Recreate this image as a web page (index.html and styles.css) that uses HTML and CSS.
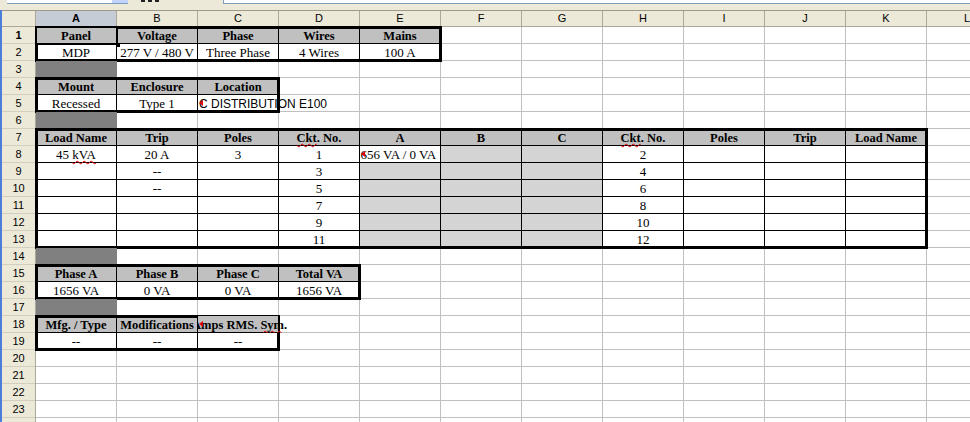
FILE: index.html
```html
<!DOCTYPE html>
<html lang="en">

<head>
    <meta charset="UTF-8" />
    <title>Panel Schedule - MDP</title>
    <link rel="stylesheet" href="styles.css">
</head>

<body>
    <div class="toolbar">
        <div class="namebox"><span class="drop"></span></div>
        <div class="tools"><i></i><i></i><i></i></div>
        <div class="formula"></div>
    </div>

    <div class="sheet">
        <div class="colheads">
            <div class="corner"></div>
            <div class="sel">A</div>
            <div>B</div>
            <div>C</div>
            <div>D</div>
            <div>E</div>
            <div>F</div>
            <div>G</div>
            <div>H</div>
            <div>I</div>
            <div>J</div>
            <div>K</div>
            <div>L</div>
        </div>

        <div class="rowheads">
            <div class="sel">1</div>
            <div>2</div>
            <div>3</div>
            <div>4</div>
            <div>5</div>
            <div>6</div>
            <div>7</div>
            <div>8</div>
            <div>9</div>
            <div>10</div>
            <div>11</div>
            <div>12</div>
            <div>13</div>
            <div>14</div>
            <div>15</div>
            <div>16</div>
            <div>17</div>
            <div>18</div>
            <div>19</div>
            <div>20</div>
            <div>21</div>
            <div>22</div>
            <div>23</div>
            <div>24</div>
        </div>

        <!-- panel info -->
        <div class="tbl t-panel">
            <div class="h cur">Panel</div>
            <div class="h">Voltage</div>
            <div class="h">Phase</div>
            <div class="h">Wires</div>
            <div class="h">Mains</div>
            <div>MDP</div>
            <div>277 V / 480 V</div>
            <div>Three Phase</div>
            <div>4 Wires</div>
            <div>100 A</div>
        </div>
        <div class="dark r3"></div>

        <!-- mounting -->
        <div class="tbl t-mount">
            <div class="h">Mount</div>
            <div class="h">Enclosure</div>
            <div class="h">Location</div>
            <div>Recessed</div>
            <div>Type 1</div>
            <div class="over"><span class="arrow"></span>C DISTRIBUTION E100</div>
        </div>
        <div class="dark r6"></div>

        <!-- circuits -->
        <div class="tbl t-circuits">
            <div class="h">Load Name</div>
            <div class="h">Trip</div>
            <div class="h">Poles</div>
            <div class="h"><span class="sp">Ckt</span>. No.</div>
            <div class="h">A</div>
            <div class="h">B</div>
            <div class="h">C</div>
            <div class="h"><span class="sp">Ckt</span>. No.</div>
            <div class="h">Poles</div>
            <div class="h">Trip</div>
            <div class="h">Load Name</div>

            <div>45 <span class="sp">kVA</span></div>
            <div>20 A</div>
            <div>3</div>
            <div>1</div>
            <div class="clip"><span class="arrow"></span>1656 VA / 0 VA</div>
            <div class="g"></div>
            <div class="g"></div>
            <div>2</div>
            <div></div>
            <div></div>
            <div></div>

            <div></div>
            <div>--</div>
            <div></div>
            <div>3</div>
            <div class="g"></div>
            <div class="g"></div>
            <div class="g"></div>
            <div>4</div>
            <div></div>
            <div></div>
            <div></div>

            <div></div>
            <div>--</div>
            <div></div>
            <div>5</div>
            <div class="g"></div>
            <div class="g"></div>
            <div class="g"></div>
            <div>6</div>
            <div></div>
            <div></div>
            <div></div>

            <div></div>
            <div></div>
            <div></div>
            <div>7</div>
            <div class="g"></div>
            <div class="g"></div>
            <div class="g"></div>
            <div>8</div>
            <div></div>
            <div></div>
            <div></div>

            <div></div>
            <div></div>
            <div></div>
            <div>9</div>
            <div class="g"></div>
            <div class="g"></div>
            <div class="g"></div>
            <div>10</div>
            <div></div>
            <div></div>
            <div></div>

            <div></div>
            <div></div>
            <div></div>
            <div>11</div>
            <div class="g"></div>
            <div class="g"></div>
            <div class="g"></div>
            <div>12</div>
            <div></div>
            <div></div>
            <div></div>
        </div>
        <div class="dark r14"></div>

        <!-- totals -->
        <div class="tbl t-totals">
            <div class="h">Phase A</div>
            <div class="h">Phase B</div>
            <div class="h">Phase C</div>
            <div class="h">Total VA</div>
            <div>1656 VA</div>
            <div>0 VA</div>
            <div>0 VA</div>
            <div>1656 VA</div>
        </div>
        <div class="dark r17"></div>

        <!-- equipment -->
        <div class="tbl t-equip">
            <div class="h">Mfg. / Type</div>
            <div class="h">Modifications</div>
            <div class="h spill"><span class="arrow"></span>Amps RMS. <span class="sp">Sym</span>.</div>
            <div>--</div>
            <div>--</div>
            <div>--</div>
        </div>
    </div>
</body>

</html>
```

FILE: styles.css
```css
html,
body {
    margin: 0;
    padding: 0;
    overflow: hidden;
}

body {
    width: 970px;
    height: 422px;
    background-color: #ece9d8;
    font-family: "Liberation Sans", Arial, sans-serif;
}

/* formula bar, only its bottom edge is visible */
.toolbar {
    display: flex;
    align-items: flex-start;
    height: 10px;
    background-color: #ece9d8;
}

.namebox {
    display: flex;
    justify-content: flex-end;
    width: 121px;
    height: 3px;
    margin-left: 7px;
    background-color: #fff;
    border-bottom: 1px solid #7f9db9;
}

.namebox .drop {
    width: 16px;
    background-color: #c1d3fb;
}

.tools {
    display: flex;
    gap: 3px;
    margin-left: 13px;
}

.tools i {
    width: 4px;
    height: 2px;
    background-color: #222;
}

.formula {
    flex: 1;
    height: 3px;
    margin-left: 64px;
    background-color: #fff;
    border-left: 1px solid #7f9db9;
    border-bottom: 1px solid #7f9db9;
}

/* the sheet */
.sheet {
    display: grid;
    grid-template-columns: 34px repeat(12, 81px);
    grid-template-rows: repeat(25, 17px);
    height: 412px;
    overflow: hidden;
    border-left: 2px solid #4a7ed8;
    background-color: #fff;
    background-image:
        linear-gradient(to right, transparent 80px, #c0c0c0 80px),
        linear-gradient(to bottom, transparent 16px, #c0c0c0 16px);
    background-size: 81px 100%, 100% 17px;
    background-position: 34px 0, 0 17px;
}

.colheads {
    grid-column: 1 / -1;
    grid-row: 1;
    display: flex;
    background-color: #ece9d8;
    border-top: 1px solid #9d9a8c;
    border-bottom: 1px solid #aca899;
    font-size: 11px;
    line-height: 15px;
    color: #000;
}

.colheads div {
    flex: 0 0 81px;
    box-sizing: border-box;
    text-align: center;
    border-right: 1px solid #aca899;
}

.colheads .corner {
    flex-basis: 34px;
}

.colheads .sel {
    background-color: #c6ccd6;
    font-weight: bold;
}

.rowheads {
    grid-column: 1;
    grid-row: 2 / -1;
    background-color: #ece9d8;
    border-right: 1px solid #aca899;
    font-size: 11px;
    color: #000;
}

.rowheads div {
    box-sizing: border-box;
    height: 17px;
    line-height: 16px;
    text-align: center;
    border-bottom: 1px solid #d3cfbf;
}

.rowheads .sel {
    font-weight: bold;
}

.dark {
    grid-column: 2;
    background-color: #808080;
}

.r3 { grid-row: 4; }
.r6 { grid-row: 7; }
.r14 { grid-row: 15; }
.r17 { grid-row: 18; }

/* bordered blocks of cells */
.tbl {
    display: grid;
    grid-template-columns: repeat(auto-fill, 81px);
    grid-auto-rows: 17px;
    background-color: #fff;
    outline: 3px solid #000;
    outline-offset: -2px;
}

.t-panel { grid-row: 2 / 4; grid-column: 2 / 7; }
.t-mount { grid-row: 5 / 7; grid-column: 2 / 5; }
.t-circuits { grid-row: 8 / 15; grid-column: 2 / 13; }
.t-totals { grid-row: 16 / 18; grid-column: 2 / 6; }
.t-equip { grid-row: 19 / 21; grid-column: 2 / 5; }

.tbl > div {
    box-sizing: border-box;
    padding-top: 1px;
    border-right: 1px solid #000;
    border-bottom: 1px solid #000;
    font-family: "Liberation Serif", "Times New Roman", serif;
    font-size: 13px;
    line-height: 16px;
    text-align: center;
    white-space: nowrap;
    color: #000;
}

.tbl .h {
    background-color: #c0c0c0;
    font-size: 12.5px;
    font-weight: bold;
}

.tbl .g {
    background-color: #d4d4d4;
}

/* red squiggle from the spell checker */
.sp {
    text-decoration: underline wavy #e00000;
    text-decoration-thickness: 1px;
    text-underline-offset: 1px;
    text-decoration-skip-ink: none;
}

/* text that does not fit its cell */
.tbl .over {
    position: relative;
    padding-left: 1px;
    text-align: left;
    font-family: "Liberation Sans", Arial, sans-serif;
    font-size: 12px;
}

.tbl .clip {
    position: relative;
    overflow: hidden;
    text-align: left;
    text-indent: -6px;
}

.tbl .spill {
    position: relative;
    text-align: left;
    text-indent: -6px;
    clip-path: inset(0 -200px 0 0);
}

.arrow {
    position: absolute;
    left: 1px;
    top: 5px;
    width: 0;
    height: 0;
    border-style: solid;
    border-width: 3px 4px 3px 0;
    border-color: transparent #e00000 transparent transparent;
}

/* cell cursor on A1 */
.tbl .cur {
    position: relative;
}

.tbl .cur::after {
    content: "";
    position: absolute;
    left: -1px;
    top: -1px;
    right: -2px;
    bottom: -2px;
    border: 2px solid #000;
}

.tbl .cur::before {
    content: "";
    position: absolute;
    right: -4px;
    bottom: -4px;
    width: 4px;
    height: 4px;
    background-color: #000;
    z-index: 1;
}
```
